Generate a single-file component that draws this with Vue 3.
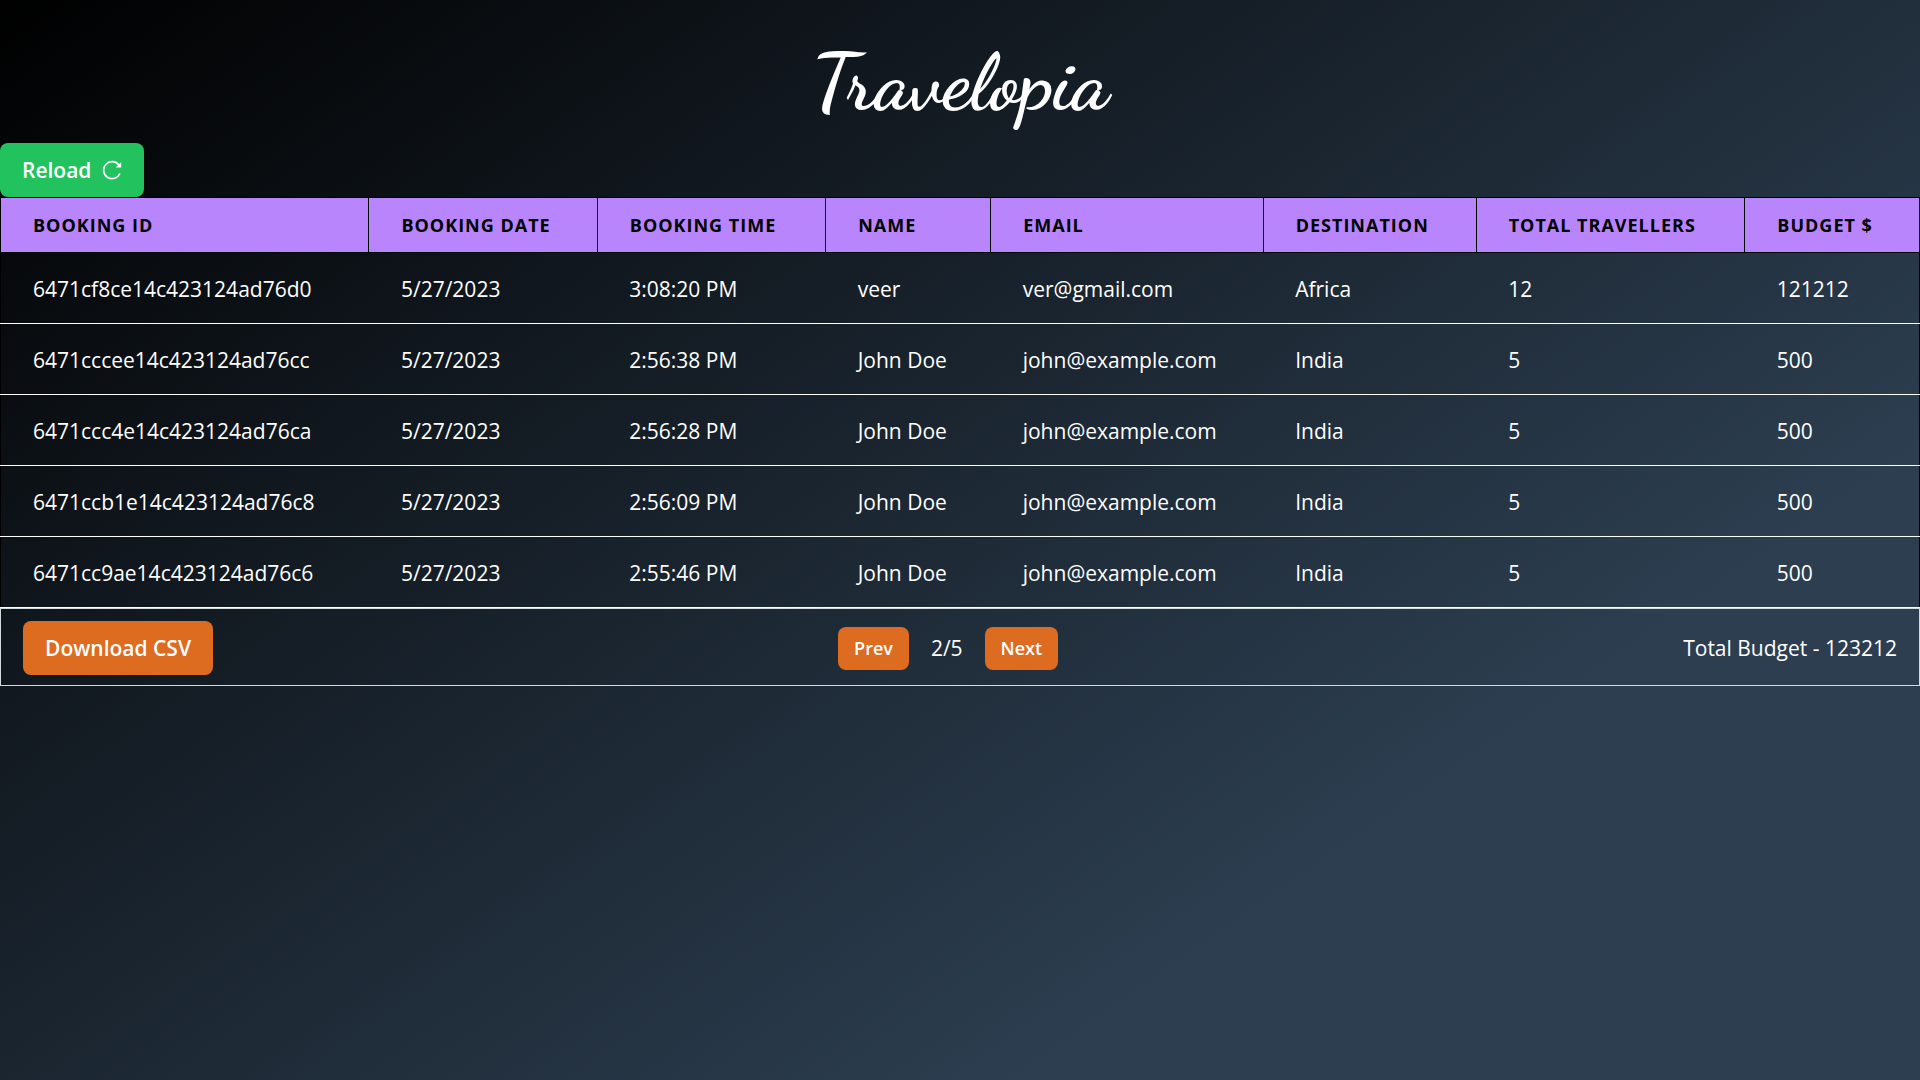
<script setup>
import { ref } from 'vue'

const columns = [
  { key: 'id', label: 'Booking ID', width: '19.2%' },
  { key: 'date', label: 'Booking Date', width: '11.9%' },
  { key: 'time', label: 'Booking Time', width: '11.9%' },
  { key: 'name', label: 'Name', width: '8.6%' },
  { key: 'email', label: 'Email', width: '14.2%' },
  { key: 'destination', label: 'Destination', width: '11.1%' },
  { key: 'travellers', label: 'Total Travellers', width: '14%' },
  { key: 'budget', label: 'Budget $', width: '9.1%' },
]

const john = { date: '5/27/2023', name: 'John Doe', email: 'john@example.com', destination: 'India', travellers: 5, budget: 500 }

const bookings = ref([
  { id: '6471cf8ce14c423124ad76d0', date: '5/27/2023', time: '3:08:20 PM', name: 'veer', email: 'ver@gmail.com', destination: 'Africa', travellers: 12, budget: 121212 },
  { ...john, id: '6471cccee14c423124ad76cc', time: '2:56:38 PM' },
  { ...john, id: '6471ccc4e14c423124ad76ca', time: '2:56:28 PM' },
  { ...john, id: '6471ccb1e14c423124ad76c8', time: '2:56:09 PM' },
  { ...john, id: '6471cc9ae14c423124ad76c6', time: '2:55:46 PM' },
])

const page = ref(2)
const pageCount = 5
const totalBudget = 123212
</script>

<template>
  <main class="page">
    <header class="brand">
      <h1>Travelopia</h1>
    </header>

    <button type="button" class="btn reload">
      Reload
      <svg class="icon" viewBox="0 0 24 24" aria-hidden="true">
        <path d="M21.500 16.200A10.200 10.200 0 1 1 20.400 6.200" />
        <path class="tip" d="M23 2.500v6.500h-6.500z" />
      </svg>
    </button>

    <table>
      <colgroup>
        <col v-for="c in columns" :key="c.key" :style="{ width: c.width }" />
      </colgroup>
      <thead>
        <tr>
          <th v-for="c in columns" :key="c.key" scope="col">{{ c.label }}</th>
        </tr>
      </thead>
      <tbody>
        <tr v-for="b in bookings" :key="b.id">
          <td v-for="c in columns" :key="c.key">{{ b[c.key] }}</td>
        </tr>
      </tbody>
    </table>

    <footer class="bar">
      <button type="button" class="btn">Download CSV</button>
      <nav class="pager" aria-label="Pages">
        <button type="button" class="btn small" @click="page = Math.max(1, page - 1)">Prev</button>
        <span>{{ page }}/{{ pageCount }}</span>
        <button type="button" class="btn small" @click="page = Math.min(pageCount, page + 1)">Next</button>
      </nav>
      <span>Total Budget - {{ totalBudget }}</span>
    </footer>
  </main>
</template>

<style>
body {
  margin: 0;
}
</style>

<style scoped>
.page {
  box-sizing: border-box;
  min-height: 100vh;
  color: #fff;
  font-family: 'Segoe UI', 'Open Sans', sans-serif;
  font-size: 21px;
  line-height: 32px;
  background: linear-gradient(145deg, #000 0%, #2c3e50 74%);
}

.brand {
  display: flex;
  justify-content: center;
  padding: 42px 0 21px;
}

h1 {
  margin: 0;
  font-family: 'Dancing Script', cursive;
  font-size: 80px;
  font-weight: 700;
  line-height: 80px;
}

.btn {
  display: inline-flex;
  align-items: center;
  gap: 11px;
  height: 54px;
  padding: 0 22px;
  border: 0;
  border-radius: 8px;
  color: #fff;
  background: #dd6b20;
  font: inherit;
  font-weight: 600;
  cursor: pointer;
}

.small {
  height: 43px;
  padding: 0 16px;
  font-size: 18px;
}

.reload {
  display: flex;
  background: #22c35e;
}

.icon {
  width: 20px;
  height: 20px;
  fill: none;
  stroke: currentColor;
  stroke-width: 2;
}

.icon .tip {
  fill: currentColor;
  stroke: none;
}

table {
  width: 100%;
  table-layout: fixed;
  border-collapse: collapse;
  border: 1px solid #000;
}

th {
  padding: 11px 32px;
  border: 1px solid #000;
  color: #000;
  background: #b985fc;
  font-size: 18px;
  font-weight: 700;
  letter-spacing: 1px;
  text-align: left;
  text-transform: uppercase;
  white-space: nowrap;
}

td {
  padding: 20px 32px 18px;
  border-bottom: 1px solid #fff;
  white-space: nowrap;
}

.bar {
  display: flex;
  align-items: center;
  justify-content: space-between;
  padding: 12px 22px 10px;
  border: 1px solid #d3dadc;
}

.pager {
  display: flex;
  align-items: center;
  gap: 22px;
}
</style>
